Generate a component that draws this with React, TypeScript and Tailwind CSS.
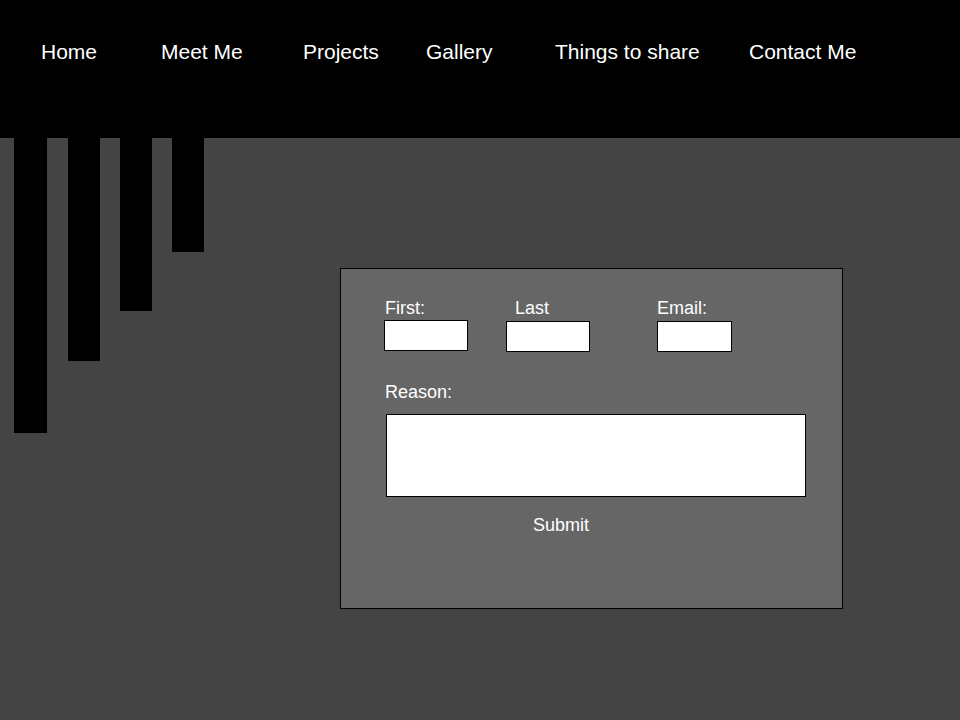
import React from "react";

const navItems: { label: string; w: string }[] = [
  { label: "Home", w: "w-[120px]" },
  { label: "Meet Me", w: "w-[142px]" },
  { label: "Projects", w: "w-[123px]" },
  { label: "Gallery", w: "w-[129px]" },
  { label: "Things to share", w: "w-[194px]" },
  { label: "Contact Me", w: "w-auto" },
];

const bars: string[] = [
  "w-[33px] h-[295px]",
  "w-[32px] h-[223px]",
  "w-[32px] h-[173px]",
  "w-[32px] h-[114px]",
];

export default function App() {
  return (
    <div
      className="w-[960px] h-[720px] bg-[#444444] flex flex-col overflow-hidden"
      style={{ fontFamily: '"Liberation Sans", Arial, sans-serif' }}
    >
      <header className="h-[138px] bg-black shrink-0">
        <nav className="flex pl-[41px] pt-[40px]">
          {navItems.map((n) => (
            <a key={n.label} href="#" className={`${n.w} text-white text-[21px] leading-[24px] whitespace-nowrap`}>
              {n.label}
            </a>
          ))}
        </nav>
      </header>
      <main className="flex items-start pl-[14px]">
        <div className="flex items-start gap-[20px] w-[190px]">
          {bars.map((b, i) => (
            <div key={i} className={`${b} bg-black ${i === 1 ? "ml-[1px]" : ""}`} />
          ))}
        </div>
        <form
          className="ml-[136px] mt-[130px] w-[503px] h-[341px] bg-[#666666] border border-black pl-[43px] pt-[29px] flex flex-col items-start text-white text-[18px] leading-[20px]"
          onSubmit={(e) => e.preventDefault()}
        >
          <div className="flex items-start">
            <div className="flex flex-col">
              <label className="ml-[1px]">First:</label>
              <input className="mt-[2px] w-[84px] h-[31px] bg-white border border-black" />
            </div>
            <div className="flex flex-col ml-[38px]">
              <label className="ml-[9px]">Last</label>
              <input className="mt-[3px] w-[84px] h-[31px] bg-white border border-black" />
            </div>
            <div className="flex flex-col ml-[67px]">
              <label>Email:</label>
              <input className="mt-[3px] w-[75px] h-[31px] bg-white border border-black" />
            </div>
          </div>
          <label className="mt-[30px] ml-[1px]">Reason:</label>
          <textarea className="mt-[12px] ml-[2px] w-[420px] h-[83px] bg-white border border-black resize-none" />
          <button type="submit" className="mt-[18px] ml-[149px] text-white text-[18px] leading-[20px]">
            Submit
          </button>
        </form>
      </main>
    </div>
  );
}
